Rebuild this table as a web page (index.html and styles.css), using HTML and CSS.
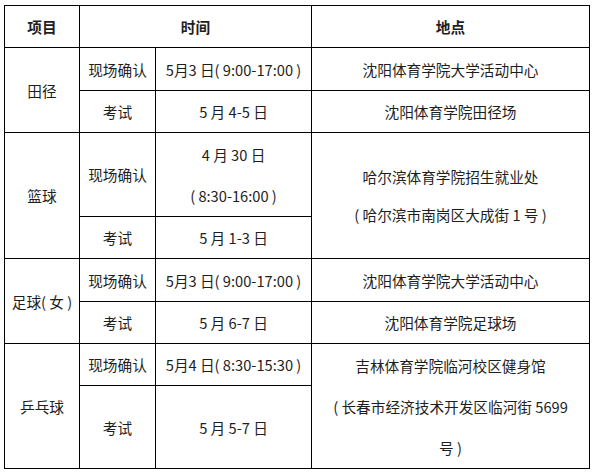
FILE: index.html
```html
<!DOCTYPE html>
<html lang="zh-CN">
<head>
<meta charset="utf-8">
<title>日程</title>
<link rel="stylesheet" href="styles.css">
</head>
<body>
<table class="schedule">
  <colgroup><col class="c1"><col class="c2"><col class="c3"><col class="c4"></colgroup>
  <thead>
    <tr class="h42"><th>项目</th><th colspan="2">时间</th><th>地点</th></tr>
  </thead>
  <tbody>
    <tr class="h43"><td rowspan="2">田径</td><td>现场确认</td><td>5月3 日( 9:00-17:00 )</td><td>沈阳体育学院大学活动中心</td></tr>
    <tr class="h42"><td>考试</td><td>5 月 4-5 日</td><td>沈阳体育学院田径场</td></tr>
    <tr class="h84"><td rowspan="2">篮球</td><td>现场确认</td><td>4 月 30 日<br>( 8:30-16:00 )</td><td rowspan="2" class="tight">哈尔滨体育学院招生就业处<br>( 哈尔滨市南岗区大成街 1 号 )</td></tr>
    <tr class="h42"><td>考试</td><td>5 月 1-3 日</td></tr>
    <tr class="h43"><td rowspan="2">足球( 女 )</td><td>现场确认</td><td>5月3 日( 9:00-17:00 )</td><td>沈阳体育学院大学活动中心</td></tr>
    <tr class="h42"><td>考试</td><td>5 月 6-7 日</td><td>沈阳体育学院足球场</td></tr>
    <tr class="h42"><td rowspan="2">乒乓球</td><td>现场确认</td><td>5月4 日( 8:30-15:30 )</td><td rowspan="2">吉林体育学院临河校区健身馆<br>( 长春市经济技术开发区临河街 5699<br>号 )</td></tr>
    <tr class="h83"><td>考试</td><td>5 月 5-7 日</td></tr>
  </tbody>
</table>
</body>
</html>
```
FILE: styles.css
```css
body {
  margin: 0;
  background: #fff;
}
.schedule {
  border-collapse: collapse;
  table-layout: fixed;
  width: 585px;
  margin: 5px 0 0 4px;
  font-family: "Noto Sans CJK SC", sans-serif;
  font-size: 14.67px;
  color: #1e1e1e;
}
.c1 { width: 75px; }
.c2 { width: 76px; }
.c3 { width: 156px; }
.c4 { width: 278px; }
.schedule th,
.schedule td {
  border: 1px solid #000;
  padding: 0;
  text-align: center;
  vertical-align: middle;
  line-height: 41px;
  white-space: nowrap;
}
.schedule th {
  font-weight: bold;
}
.h42 { height: 42px; }
.h43 { height: 43px; }
.h83 { height: 83px; }
.h84 { height: 84px; }
.schedule td.tight {
  line-height: 38px;
}
```
